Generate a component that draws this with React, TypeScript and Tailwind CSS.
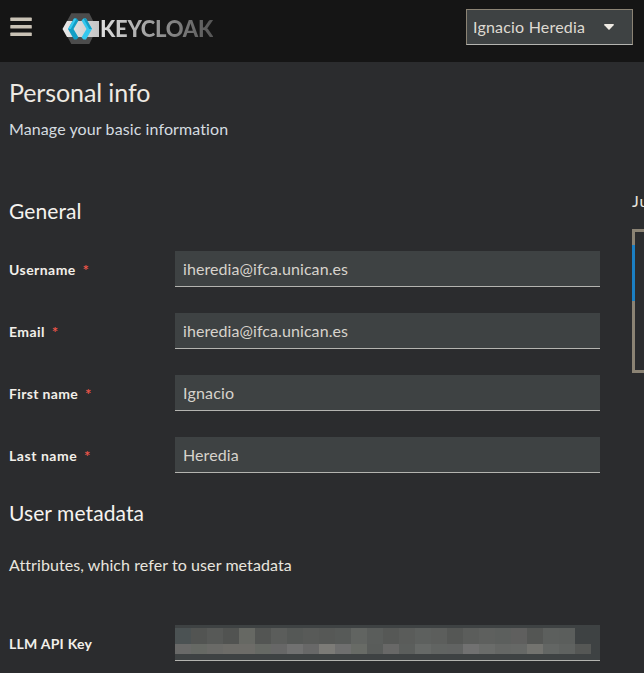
import React from "react";

const topCells = [
  "#4b5253", "#525452", "#575957", "#515351", "#666863", "#535553", "#5b5d5b", "#555856", "#585a58",
  "#565856", "#575a58", "#616461", "#5a5d5b", "#565856", "#5a5c5a", "#5d605e", "#5c5e5c", "#555755",
  "#5b5d5b", "#5e605e", "#5c5f5d", "#5f5f5e", "#545654", "#5c5f5d", "#5b5e5c",
];
const bottomCells = [
  "#696968", "#666964", "#6a6a67", "#6d6c68", "#6d6c68", "#666964", "#676767", "#717171", "#686868",
  "#7c7b77", "#6f6f6f", "#686b66", "#595c5a", "#686867", "#5b5e5c", "#666967", "#616462", "#616362",
  "#717171", "#6a6c6a", "#656765", "#666866", "#73736f", "#636664", "#5f6260", "#555755",
];

function Label({ text, spacing, required = true }: { text: string; spacing: string; required?: boolean }) {
  return (
    <div className="flex w-[166px] shrink-0 items-center text-[14px] leading-[21px] font-bold text-[#f2efe9]">
      <span className={spacing}>{text}</span>
      {required && <span className="mt-px ml-[7px] font-['Inter',sans-serif] text-[12px] leading-5 font-normal text-[#f0564a]">*</span>}
    </div>
  );
}

function Field({ label, value, spacing, valueSpacing }: { label: string; value: string; spacing: string; valueSpacing: string }) {
  return (
    <div className="flex h-9 items-center">
      <Label text={label} spacing={spacing} />
      <div className="flex h-9 w-[425px] items-center border-b border-[#b4b4b0] bg-[#3e4243] px-2 pt-px text-[16px] text-[#d7d3cc]">
        <span className={valueSpacing}>{value}</span>
      </div>
    </div>
  );
}

function Logo() {
  return (
    <div className="flex items-center">
      <svg width="38" height="34" viewBox="0 0 38 34">
        <defs>
          <linearGradient id="band" x1="0" x2="1">
            <stop stopColor="#e9e9e9" />
            <stop offset="1" stopColor="#c5c5c5" />
          </linearGradient>
        </defs>
        <path d="M9.300 1.300H27.300L35 16.500 27.300 32H9.300L1 16.500z" fill="#4c4c4c" />
        <path d="M5 9H37v16H5L.5 17z" fill="url(#band)" />
        <path d="M12 6.500h2.500L16.500 8.500 11.500 17l5 8.500-2 2H12L6 17z" fill="#139ec5" />
        <path d="M12 6.500h2.500L8.800 17H6z" fill="#35c8ee" />
        <path d="M21.500 6.500H24L30 17l-6 10.500h-2.500L19.500 25.500 24.500 17 19.500 8.500z" fill="#35c8ee" />
        <path d="M21.500 6.500H24L30 17H27.200z" fill="#139ec5" />
      </svg>
      <span className="bg-linear-to-r from-[#e0e0e0] to-[#555] bg-clip-text text-[22px] leading-[34px] font-black tracking-[-0.25px] text-transparent">
        KEYCLOAK
      </span>
    </div>
  );
}

export default function App() {
  return (
    <div className="flex h-[673px] w-[644px] flex-col overflow-hidden bg-[#2b2c2e] font-['Lato',sans-serif] whitespace-nowrap">
      <header className="flex h-[62px] shrink-0 items-start bg-[#151515] pl-[10px]">
        <svg className="mt-[17px]" width="22" height="20" viewBox="0 0 22 20" fill="#c9c2b5">
          <rect x=".3" y=".6" width="21.500" height="3.500" rx=".6" />
          <rect x=".3" y="8.100" width="21.500" height="3.500" rx=".6" />
          <rect x=".3" y="15.600" width="21.500" height="3.500" rx=".6" />
        </svg>
        <div className="mt-3 ml-[30px]">
          <Logo />
        </div>
        <button className="mt-[9px] mr-[11px] ml-auto flex h-9 w-[167px] items-center border border-[#8b8374] border-b-[#b4b4b0] bg-[#3e4243] pl-[6px] text-[16px] text-[#dedad2]">
          <span className="tracking-[0.2px]">Ignacio Heredia</span>
          <svg className="mr-[18px] ml-auto" width="10" height="6" viewBox="0 0 10 6" fill="#eeeae3">
            <path d="M.8 0h8.400q1.200.2.400 1.200L5.600 5.500q-.6.600-1.200 0L.4 1.200Q-.4.200.8 0z" />
          </svg>
        </button>
      </header>
      <main className="flex min-h-0 grow">
        <section className="ml-[9px] flex w-[591px] shrink-0 flex-col">
          <h1 className="mt-[15px] text-[25px] leading-[31px] tracking-[-0.1px] text-[#eeeae3]">Personal info</h1>
          <p className="mt-[9px] text-[16px] leading-6 tracking-[0.1px] text-[#d5dce0]">Manage your basic information</p>
          <h2 className="mt-[57px] text-[21px] leading-[26px] tracking-[0.1px] text-[#f5f3ef]">General</h2>
          <div className="mt-[27px] flex flex-col gap-[26px]">
            <Field label="Username" value="iheredia@ifca.unican.es" spacing="tracking-[0.45px]" valueSpacing="tracking-[0.08px]" />
            <Field label="Email" value="iheredia@ifca.unican.es" spacing="tracking-[0.45px]" valueSpacing="tracking-[0.08px]" />
            <Field label="First name" value="Ignacio" spacing="tracking-[0.35px]" valueSpacing="tracking-[0.2px]" />
            <Field label="Last name" value="Heredia" spacing="tracking-[0.55px]" valueSpacing="tracking-[0.1px]" />
          </div>
          <h2 className="mt-[27px] text-[21px] leading-[26px] tracking-[0.08px] text-[#f5f3ef]">User metadata</h2>
          <p className="mt-[27px] text-[16px] leading-6 tracking-[0.08px] text-[#e8e5df]">Attributes, which refer to user metadata</p>
          <div className="mt-[48px] flex h-9 items-center">
            <Label text="LLM API Key" spacing="tracking-[0.25px]" required={false} />
            <div className="flex h-9 w-[425px] flex-col border-b border-[#b4b4b0] bg-[#3e4243] pt-[3px]">
              <div className="flex">
                {topCells.map((c, i) => <i key={i} className="h-4 w-4" style={{ backgroundColor: c }} />)}
              </div>
              <div className="flex">
                {bottomCells.map((c, i) => <i key={i} className="h-[10px] w-4" style={{ backgroundColor: c }} />)}
              </div>
            </div>
          </div>
        </section>
        <aside className="ml-8 w-20 shrink-0 pt-[127px]">
          <p className="text-[16px] leading-6 tracking-[1px] text-[#e8e5df]">Ju</p>
          <div className="mt-[16px] flex h-[144px] flex-col border-[3px] border-r-0 border-[#8b8374]">
            <i className="mt-[13px] -ml-[3px] h-14 w-[3px] bg-[#1b7fc3]" />
          </div>
        </aside>
      </main>
    </div>
  );
}
